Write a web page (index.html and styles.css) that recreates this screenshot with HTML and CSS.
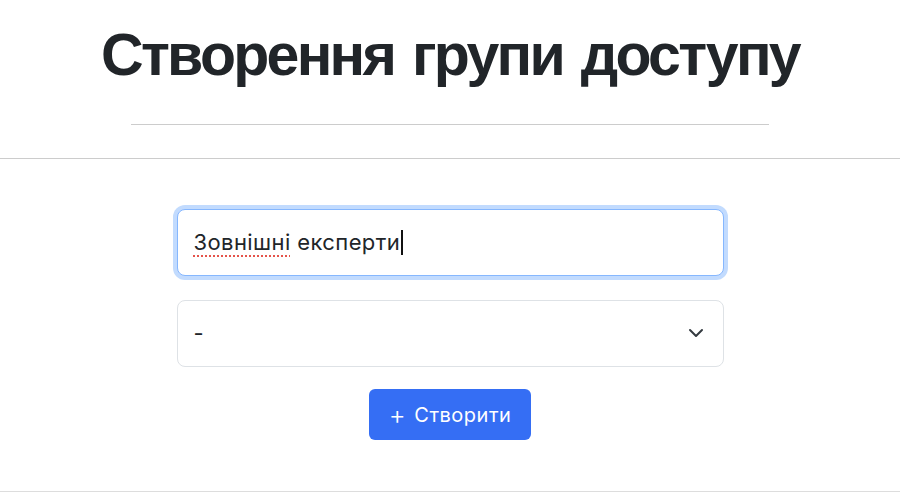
FILE: index.html
```html
<!DOCTYPE html>
<html lang="uk">
<head>
  <meta charset="UTF-8" />
  <meta name="viewport" content="width=device-width, initial-scale=1.0" />
  <title>Створення групи доступу</title>
  <link rel="stylesheet" href="styles.css">
</head>
<body>

  <header class="page-head">
    <h1>Створення групи доступу</h1>
    <hr class="head-rule">
  </header>

  <hr class="section-rule">

  <form class="group-form">
    <div class="text-field focused">
      <span class="misspelled">Зовнішні</span>&nbsp;експерти<span class="caret"></span>
    </div>

    <div class="select-wrap">
      <select class="select-field">
        <option>-</option>
      </select>
      <svg class="chevron" width="16" height="16" viewBox="0 0 16 16">
        <path d="M2 5l6 6 6-6" fill="none" stroke="#343a40" stroke-width="2" stroke-linecap="round" stroke-linejoin="round"/>
      </svg>
    </div>

    <button type="button" class="btn-create"><span class="plus">+</span> Створити</button>
  </form>

  <hr class="section-rule bottom">

</body>
</html>
```

FILE: styles.css
```css
/* General */
body {
  font-family: Inter, "Liberation Sans", Arial, sans-serif;
  margin: 0;
  padding: 0;
  background-color: #fff;
  color: #212529;
}

/* Heading */
.page-head {
  text-align: center;
  padding-top: 20px;
}

.page-head h1 {
  font-family: "Liberation Sans", Arial, sans-serif;
  font-size: 59px;
  font-weight: bold;
  letter-spacing: -2.7px;
  word-spacing: 4px;
  margin: 0;
  line-height: 1.2;
}

.head-rule {
  width: 638px;
  margin: 33px auto 0;
  border: 0;
  border-top: 1px solid #ccc;
}

.section-rule {
  border: 0;
  border-top: 1px solid #ccc;
  margin: 33px 0 0;
}

.section-rule.bottom {
  border-top-color: #ddd;
  margin-top: 51px;
}

/* Form */
.group-form {
  width: 547px;
  margin: 50px auto 0;
  display: flex;
  flex-direction: column;
  align-items: center;
}

.text-field {
  box-sizing: border-box;
  width: 100%;
  height: 67px;
  padding: 0 16px;
  display: flex;
  align-items: center;
  font-size: 22px;
  letter-spacing: 0.4px;
  color: #212529;
  border: 1px solid #dee2e6;
  border-radius: 8px;
  background: #fff;
}

.text-field.focused {
  border-color: #86b7fe;
  box-shadow: 0 0 0 4px rgba(13, 110, 253, 0.25);
}

.misspelled {
  text-decoration: underline dotted #e5534b;
  text-decoration-thickness: 2px;
  text-underline-offset: 5px;
}

.caret {
  display: inline-block;
  width: 2px;
  height: 25px;
  background: #111;
  margin-left: 1px;
}

.select-wrap {
  position: relative;
  width: 100%;
  margin-top: 24px;
}

.select-field {
  box-sizing: border-box;
  width: 100%;
  height: 67px;
  padding: 0 16px;
  font-family: inherit;
  font-size: 22px;
  color: #212529;
  background: #fff;
  border: 1px solid #dee2e6;
  border-radius: 8px;
  appearance: none;
  -webkit-appearance: none;
}

.chevron {
  position: absolute;
  right: 20px;
  top: 25px;
  pointer-events: none;
}

.btn-create {
  margin-top: 22px;
  font-family: inherit;
  font-size: 20px;
  letter-spacing: 0.5px;
  color: #fff;
  background-color: #356ef4;
  border: 0;
  border-radius: 6px;
  width: 162px;
  height: 51px;
  cursor: pointer;
}

.btn-create .plus {
  font-size: 26px;
  font-weight: 300;
  margin-right: 2px;
  vertical-align: -2px;
}
```
